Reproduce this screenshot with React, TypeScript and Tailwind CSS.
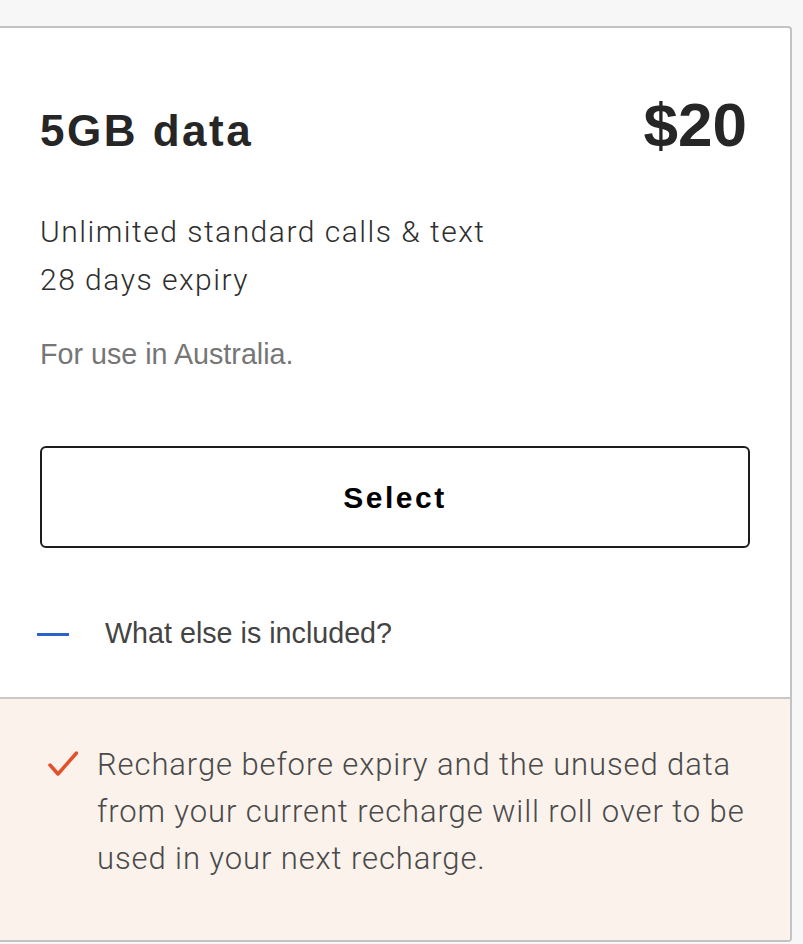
export default function App() {
  return (
    <div className="min-h-screen bg-[#f7f7f7] pt-[26px] pr-[11px]">
      <div className="flex flex-col overflow-hidden rounded-r-[4px] border-y-2 border-r-2 border-l-0 border-[#c3c3c3] bg-white">
        {/* Plan header */}
        <div className="px-[40px] pt-[66px]">
          <div className="flex items-baseline justify-between leading-none text-[#262626]">
            <span className="font-['Liberation_Sans',Arial,sans-serif] text-[44px] font-bold tracking-[2.5px]">
              5GB data
            </span>
            <span className="mr-[3px] font-['Liberation_Sans',Arial,sans-serif] text-[62px] font-bold">
              $20
            </span>
          </div>

          <div className="mt-[52px] font-['Roboto',sans-serif] text-[30px] font-light leading-[48px] tracking-[1.5px] text-[#2e2e2e]">
            <p>Unlimited standard calls &amp; text</p>
            <p>28 days expiry</p>
          </div>

          <p className="mt-[32px] font-['Liberation_Sans',Arial,sans-serif] text-[28.7px] leading-[36px] text-[#767676]">
            For use in Australia.
          </p>

          <button className="mt-[74px] flex h-[102px] w-full items-center justify-center rounded-[6px] border-2 border-[#1c1c1c] bg-white font-['Liberation_Sans',Arial,sans-serif] text-[30px] font-bold tracking-[2.5px] text-black">
            Select
          </button>

          <div className="mt-[66px] flex h-[40px] items-center">
            <span className="-ml-[3px] h-[3px] w-[32px] bg-[#2d62cc]" />
            <span className="ml-[36px] font-['Liberation_Sans',Arial,sans-serif] text-[28.7px] text-[#444444]">
              What else is included?
            </span>
          </div>
        </div>

        <div className="mt-[43px] h-[2px] bg-[#c8c8c8]" />

        {/* Rollover note */}
        <div className="flex gap-[19px] bg-[#fbf2ec] pl-[48px] pr-[40px] pt-[42px] pb-[58px]">
          <svg className="mt-[10px] shrink-0" width="30" height="26" viewBox="0 0 30 26" fill="none">
            <path d="M2 14 L10 23 L28.5 2" stroke="#e4502a" strokeWidth="3.5" strokeLinecap="round" strokeLinejoin="round" />
          </svg>
          <p className="font-['Roboto',sans-serif] text-[31px] font-light leading-[47px] tracking-[0.9px] text-[#4a4a4a]">
            Recharge before expiry and the unused data from your current recharge will roll over to be used in your next recharge.
          </p>
        </div>
      </div>
    </div>
  );
}
